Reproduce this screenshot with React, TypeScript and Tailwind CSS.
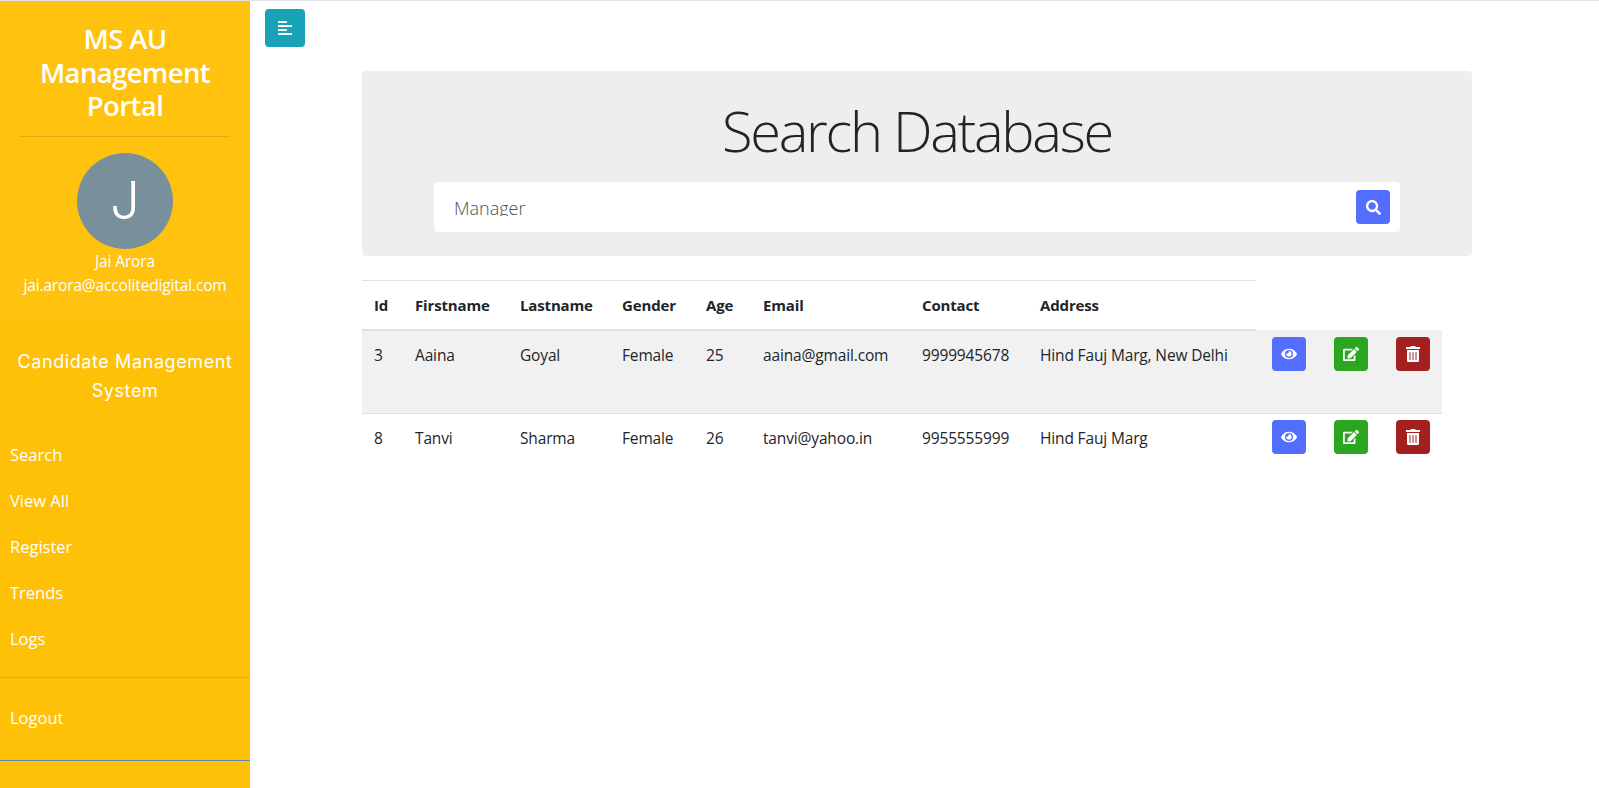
import { FaAlignLeft, FaEdit, FaEye, FaSearch, FaTrashAlt } from 'react-icons/fa';

const FONT = "font-['Open_Sans','Noto_Sans',sans-serif]";

const navLinks = ['Search', 'View All', 'Register', 'Trends', 'Logs'];

const columns = ['Id', 'Firstname', 'Lastname', 'Gender', 'Age', 'Email', 'Contact', 'Address'];

const candidates = [
    { id: 3, first: 'Aaina', last: 'Goyal', gender: 'Female', age: 25, email: 'aaina@gmail.com', contact: '9999945678', address: 'Hind Fauj Marg, New Delhi' },
    { id: 8, first: 'Tanvi', last: 'Sharma', gender: 'Female', age: 26, email: 'tanvi@yahoo.in', contact: '9955555999', address: 'Hind Fauj Marg' },
];

const Sidebar = () => (
    <aside className="w-[250px] shrink-0 bg-[#ffc107] text-white">
        <div className="h-[321px] bg-[#ffc20e]">
            <div className="px-5 pt-[21px] text-center">
                <h3 className="text-[27.5px] font-semibold leading-[33.5px] tracking-[-0.6px]">MS AU Management Portal</h3>
                <div className="mt-[13px] border-t border-[#e3ad10]"></div>
            </div>
            <div className="mx-auto mt-4 flex h-24 w-24 items-center justify-center rounded-full bg-[#78909c] font-['Inter',sans-serif] text-[52px] font-light leading-none">J</div>
            <div className="text-center text-[15.5px] leading-6 tracking-[-0.15px]">
                <p>Jai Arora</p>
                <p>jai.arora@accolitedigital.com</p>
            </div>
        </div>
        <p className="mt-[25px] px-2 text-center font-['Inter',sans-serif] text-[18px] leading-[29px] tracking-[0.6px]">Candidate Management System</p>
        <nav className="mt-[27px]">
            {navLinks.map((link) => (
                <a key={link} className="block h-[46px] px-2.5 text-[16.5px] leading-[46px]">{link}</a>
            ))}
        </nav>
        <div className="mt-[15px] border-t border-[#e3ad10] pt-[17px]">
            <a className="block h-[46px] px-2.5 text-[16.5px] leading-[46px]">Logout</a>
        </div>
        <div className="mt-[19px] border-t border-[#5f87a8]"></div>
    </aside>
);

const ActionButton = ({ color, children }: { color: string; children: React.ReactNode }) => (
    <button className={`ml-[16px] flex h-[34px] w-[34px] items-center justify-center rounded-[4px] text-[16px] text-white ${color}`}>
        {children}
    </button>
);

export default function App() {
    return (
        <div className={`flex min-h-[788px] border-t border-[#dee2e6] bg-white text-[#212529] ${FONT}`}>
            <Sidebar />
            <main className="flex-1">
                <button className="ml-[15px] mt-2 flex h-[38px] w-10 items-center justify-center rounded-[4px] bg-[#17a2b8] text-[16px] text-white">
                    <FaAlignLeft />
                </button>
                <section className="ml-[112px] mt-6 w-[1110px] rounded-[4px] bg-[#eeeeee] px-[72px] pb-6 pt-[26px]">
                    <h1 className="text-center text-[56px] font-light leading-[67px] tracking-[-2.3px]">Search Database</h1>
                    <div className="mt-[18px] flex h-[50px] w-[966px] items-center rounded-[4px] bg-white pl-5 pr-[10px]">
                        <div className="mb-[2px] h-5 flex-1 overflow-hidden text-[18px] font-light leading-6 text-[#495057]">Manager</div>
                        <button className="flex h-[34px] w-[34px] items-center justify-center rounded-[4px] bg-[#536dfe] text-[15px] text-white">
                            <FaSearch />
                        </button>
                    </div>
                </section>
                <table className="ml-[112px] mt-6 w-[1080px] table-fixed border-collapse text-[15.5px] tracking-[-0.15px]">
                    <colgroup>
                        <col className="w-[41px]" />
                        <col className="w-[105px]" />
                        <col className="w-[102px]" />
                        <col className="w-[84px]" />
                        <col className="w-[57px]" />
                        <col className="w-[159px]" />
                        <col className="w-[118px]" />
                        <col className="w-[228px]" />
                        <col className="w-[62px]" />
                        <col className="w-[62px]" />
                        <col className="w-[62px]" />
                    </colgroup>
                    <thead>
                        <tr>
                            {columns.map((col) => (
                                <th key={col} className="h-[49px] border-t border-b-2 border-[#dee2e6] px-3 text-left text-[15px] font-bold text-[#212529]">{col}</th>
                            ))}
                        </tr>
                    </thead>
                    <tbody>
                        {candidates.map((c, i) => {
                            const actionCell = i === 0 ? 'pt-[7px] align-top' : 'pt-1.5 align-top';
                            return (
                                <tr key={c.id} className={i === 0 ? 'h-[84px] border-b border-[#dee2e6] bg-[#f1f1f2]' : 'h-[83px]'}>
                                    {[c.id, c.first, c.last, c.gender, c.age, c.email, c.contact, c.address].map((val, j) => (
                                        <td key={j} className="px-3 pb-[44px] pt-3 align-top leading-[24px] whitespace-nowrap">{val}</td>
                                    ))}
                                    <td className={actionCell}>
                                        <ActionButton color="bg-[#536dfe]"><FaEye /></ActionButton>
                                    </td>
                                    <td className={actionCell}>
                                        <ActionButton color="bg-[#2ca520]"><FaEdit /></ActionButton>
                                    </td>
                                    <td className={actionCell}>
                                        <ActionButton color="bg-[#a32020]"><FaTrashAlt /></ActionButton>
                                    </td>
                                </tr>
                            );
                        })}
                    </tbody>
                </table>
            </main>
        </div>
    );
}
